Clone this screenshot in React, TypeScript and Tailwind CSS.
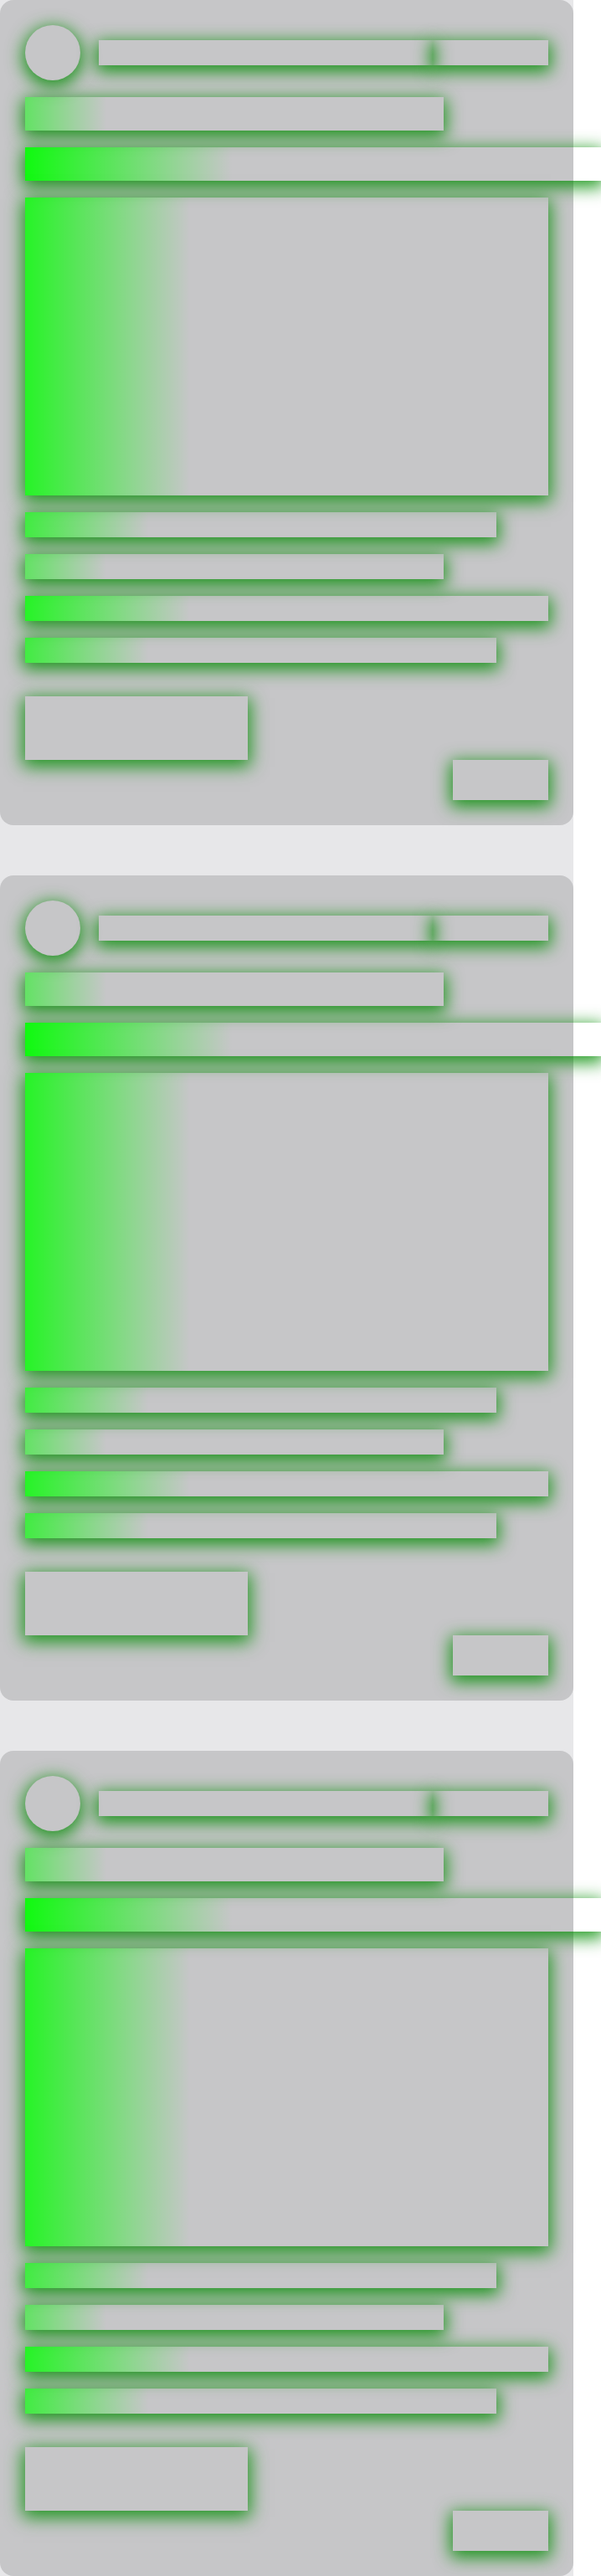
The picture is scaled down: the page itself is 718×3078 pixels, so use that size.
const glow = "shadow-[0_5px_20px_3px_rgba(0,140,0,0.85)]";
const shimmer =
  "bg-[linear-gradient(90deg,#00ff00_calc(41%_-_303px),transparent_calc(80%_-_303px))]";

const lines = ["w-[90%]", "w-[80%]", "w-full", "w-[90%]"];

function SkeletonCard() {
  return (
    <div className="flex flex-col gap-5 rounded-2xl bg-[#c6c6c8] p-[30px]">
      <div className="flex items-center gap-[22px]">
        <div className={`size-[66px] shrink-0 rounded-full ${glow}`} />
        <div className="flex flex-1">
          <div className={`h-[30px] flex-1 ${glow}`} />
          <div className={`h-[30px] w-[138px] ${glow}`} />
        </div>
      </div>

      <div className={`h-10 w-[80%] ${shimmer} ${glow}`} />
      <div className={`h-10 w-[110%] shrink-0 ${shimmer} ${glow}`} />

      <div className={`h-[356px] w-full ${shimmer} ${glow}`} />

      {lines.map((w, i) => (
        <div key={i} className={`h-[30px] ${w} ${shimmer} ${glow}`} />
      ))}

      <div className="mt-5 flex flex-col">
        <div className={`h-[76px] w-[266px] ${glow}`} />
        <div className={`h-12 w-[114px] self-end ${glow}`} />
      </div>
    </div>
  );
}

export default function App() {
  return (
    <div className="min-h-screen bg-white">
      <div className="flex w-[685px] flex-col gap-[60px] bg-[#e7e7e9]">
        <SkeletonCard />
        <SkeletonCard />
        <SkeletonCard />
      </div>
    </div>
  );
}
